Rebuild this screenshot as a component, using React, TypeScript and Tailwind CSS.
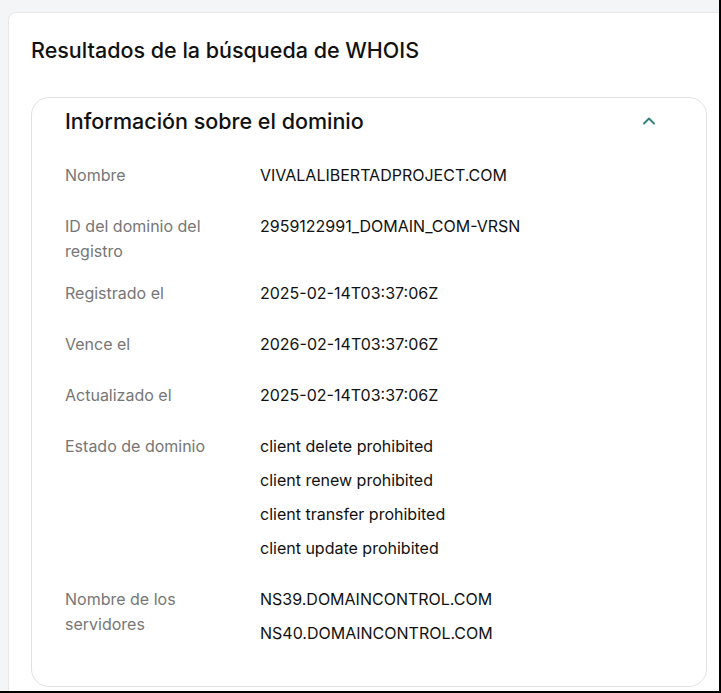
import { ChevronUp } from 'lucide-react';

type Row = {
  label: string;
  values: string[];
};

const rows: Row[] = [
  { label: 'Nombre', values: ['VIVALALIBERTADPROJECT.COM'] },
  { label: 'ID del dominio del registro', values: ['2959122991_DOMAIN_COM-VRSN'] },
  { label: 'Registrado el', values: ['2025-02-14T03:37:06Z'] },
  { label: 'Vence el', values: ['2026-02-14T03:37:06Z'] },
  { label: 'Actualizado el', values: ['2025-02-14T03:37:06Z'] },
  {
    label: 'Estado de dominio',
    values: [
      'client delete prohibited',
      'client renew prohibited',
      'client transfer prohibited',
      'client update prohibited',
    ],
  },
  { label: 'Nombre de los servidores', values: ['NS39.DOMAINCONTROL.COM', 'NS40.DOMAINCONTROL.COM'] },
];

export default function App() {
  return (
    <div className="w-[721px] h-[693px] overflow-hidden bg-[#f4f5f6] border-r-2 border-b-2 border-black font-['Inter',sans-serif]">
      <div className="ml-2 mt-3 h-full bg-white border-l border-t border-[#e6e8ea] rounded-tl-lg pl-[22px] pr-[12px] pt-[22px]">
        <h1 className="text-[21.5px] leading-[30px] font-medium text-[#111]">
          Resultados de la búsqueda de WHOIS
        </h1>

        <section className="mt-[32px] h-[590px] border border-[#e2e2e2] rounded-[18px] pl-[33px] pr-[47px] pt-[8px]">
          <div className="flex items-center justify-between">
            <h2 className="text-[21.5px] leading-[30px] font-medium text-[#111]">Información sobre el dominio</h2>
            <ChevronUp className="size-5 text-[#2f817d]" strokeWidth={2.25} />
          </div>

          <dl className="mt-[27px] flex flex-col gap-[17px]">
            {rows.map((row) => (
              <div key={row.label} className="flex">
                <dt className="w-[195px] pr-4 text-[16px] leading-[25px] text-[#767676]">{row.label}</dt>
                <dd className="flex flex-col">
                  {row.values.map((v) => (
                    <span key={v} className="text-[16px] leading-[25px] mb-[9px] text-[#111]">
                      {v}
                    </span>
                  ))}
                </dd>
              </div>
            ))}
          </dl>
        </section>
      </div>
    </div>
  );
}
